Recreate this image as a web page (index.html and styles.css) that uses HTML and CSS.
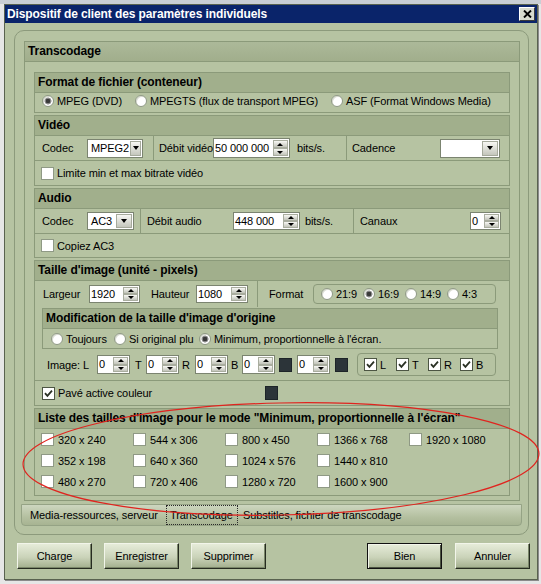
FILE: index.html
```html
<!DOCTYPE html>
<html lang="fr">
<head>
<meta charset="utf-8">
<title>Dispositif de client des paramètres individuels</title>
<link rel="stylesheet" href="styles.css">
</head>
<body>
<div class="screen">
  <div class="dialog">
    <div class="titlebar">
      <span class="title">Dispositif de client des paramètres individuels</span>
      <span class="close"><svg width="9" height="8" viewBox="0 0 9 8"><path d="M1 0.5 L8 7.5 M8 0.5 L1 7.5" stroke="#000" stroke-width="1.9" fill="none"/></svg></span>
    </div>
    <div class="dlg-body">
      <div class="tabpanel">
        <div class="group">
          <div class="ghead">Transcodage</div>
          <div class="gbody">

            <div class="sub sub-fmt">
              <div class="shead">Format de fichier (conteneur)</div>
              <div class="fmt-row">
                <span class="opt w-mpeg"><i class="rb on"></i>MPEG (DVD)</span>
                <span class="opt w-mpegts"><i class="rb"></i>MPEGTS (flux de transport MPEG)</span>
                <span class="opt"><i class="rb"></i>ASF (Format Windows Media)</span>
              </div>
            </div>

            <div class="sub sub-video">
              <div class="shead">Vidéo</div>
              <div class="cells cells-video">
                <div class="cell c-pad7"><span class="lbl lbl-codec">Codec</span><span class="combo combo-v"><span class="val">MPEG2</span><span class="drop"></span></span></div>
                <div class="cell c-pad5"><span class="lbl lbl-vbr">Débit vidéo</span><span class="spin spin-vbr"><span class="val">50 000 000</span><span class="arrows"><b class="up"></b><b class="dn"></b></span></span><span class="unit unit-v">bits/s.</span></div>
                <div class="cell c-pad5 c-last"><span class="lbl">Cadence</span><span class="combo combo-cad"><span class="val"></span><span class="drop"></span></span></div>
              </div>
              <div class="chk-row row24"><span class="opt"><i class="cb"></i>Limite min et max bitrate vidéo</span></div>
            </div>

            <div class="sub sub-audio">
              <div class="shead">Audio</div>
              <div class="cells cells-audio">
                <div class="cell c-pad7"><span class="lbl lbl-codec">Codec</span><span class="combo combo-a"><span class="val">AC3</span><span class="drop"></span></span></div>
                <div class="cell c-pad6"><span class="lbl lbl-abr">Débit audio</span><span class="spin spin-abr"><span class="val">448 000</span><span class="arrows"><b class="up"></b><b class="dn"></b></span></span><span class="unit unit-a">bits/s.</span></div>
                <div class="cell c-pad6 c-last"><span class="lbl">Canaux</span><span class="spin spin-ch"><span class="val">0</span><span class="arrows"><b class="up"></b><b class="dn"></b></span></span></div>
              </div>
              <div class="chk-row row23"><span class="opt"><i class="cb"></i>Copiez AC3</span></div>
            </div>

            <div class="sub sub-size">
              <div class="shead">Taille d'image (unité - pixels)</div>
              <div class="size-row">
                <div class="size-left">
                  <span class="lbl lbl-w">Largeur</span>
                  <span class="spin spin-size1"><span class="val">1920</span><span class="arrows"><b class="up"></b><b class="dn"></b></span></span>
                  <span class="lbl lbl-h">Hauteur</span>
                  <span class="spin spin-size2"><span class="val">1080</span><span class="arrows"><b class="up"></b><b class="dn"></b></span></span>
                </div>
                <div class="size-right">
                  <span class="lbl lbl-fmt">Format</span>
                  <div class="ratio-box">
                    <span class="opt"><i class="rb"></i>21:9</span>
                    <span class="opt"><i class="rb on"></i>16:9</span>
                    <span class="opt"><i class="rb"></i>14:9</span>
                    <span class="opt"><i class="rb"></i>4:3</span>
                  </div>
                </div>
              </div>

              <div class="sub sub-mod">
                <div class="shead">Modification de la taille d'image d'origine</div>
                <div class="mod-row">
                  <span class="opt w-tj"><i class="rb"></i>Toujours</span>
                  <span class="opt w-si"><i class="rb"></i>Si original plu</span>
                  <span class="opt"><i class="rb on"></i>Minimum, proportionnelle à l'écran.</span>
                </div>
              </div>

              <div class="img-row">
                <span class="lbl lbl-img">Image: L</span>
                <span class="spin spin-img"><span class="val">0</span><span class="arrows"><b class="up"></b><b class="dn"></b></span></span>
                <span class="lbl lbl-t">T</span>
                <span class="spin spin-img"><span class="val">0</span><span class="arrows"><b class="up"></b><b class="dn"></b></span></span>
                <span class="lbl lbl-r">R</span>
                <span class="spin spin-img"><span class="val">0</span><span class="arrows"><b class="up"></b><b class="dn"></b></span></span>
                <span class="lbl lbl-b">B</span>
                <span class="spin spin-img"><span class="val">0</span><span class="arrows"><b class="up"></b><b class="dn"></b></span></span>
                <span class="swatch sw-a"></span>
                <span class="spin spin-img sp-e"><span class="val">0</span><span class="arrows"><b class="up"></b><b class="dn"></b></span></span>
                <span class="swatch sw-b"></span>
                <div class="chk-box">
                  <span class="chk-item"><i class="cb on"><svg width="11" height="11" viewBox="0 0 11 11"><path d="M2 5.2 L4.4 7.8 L9 2.6" stroke="#2a3124" stroke-width="1.8" fill="none"/></svg></i>L</span>
                  <span class="chk-item"><i class="cb on"><svg width="11" height="11" viewBox="0 0 11 11"><path d="M2 5.2 L4.4 7.8 L9 2.6" stroke="#2a3124" stroke-width="1.8" fill="none"/></svg></i>T</span>
                  <span class="chk-item"><i class="cb on"><svg width="11" height="11" viewBox="0 0 11 11"><path d="M2 5.2 L4.4 7.8 L9 2.6" stroke="#2a3124" stroke-width="1.8" fill="none"/></svg></i>R</span>
                  <span class="chk-item"><i class="cb on"><svg width="11" height="11" viewBox="0 0 11 11"><path d="M2 5.2 L4.4 7.8 L9 2.6" stroke="#2a3124" stroke-width="1.8" fill="none"/></svg></i>B</span>
                </div>
              </div>

              <div class="pave-row">
                <span class="opt pave-opt"><i class="cb on"><svg width="11" height="11" viewBox="0 0 11 11"><path d="M2 5.2 L4.4 7.8 L9 2.6" stroke="#2a3124" stroke-width="1.8" fill="none"/></svg></i>Pavé active couleur</span>
                <span class="swatch"></span>
              </div>
            </div>

            <div class="sub sub-list">
              <div class="shead">Liste des tailles d'image pour le mode "Minimum, proportionnelle à l'écran"</div>
              <div class="list-grid">
                <span class="lopt"><i class="cb"></i>320 x 240</span>
                <span class="lopt"><i class="cb"></i>544 x 306</span>
                <span class="lopt"><i class="cb"></i>800 x 450</span>
                <span class="lopt"><i class="cb"></i>1366 x 768</span>
                <span class="lopt"><i class="cb"></i>1920 x 1080</span>
                <span class="lopt"><i class="cb"></i>352 x 198</span>
                <span class="lopt"><i class="cb"></i>640 x 360</span>
                <span class="lopt"><i class="cb"></i>1024 x 576</span>
                <span class="lopt"><i class="cb"></i>1440 x 810</span>
                <span class="lopt empty"></span>
                <span class="lopt"><i class="cb"></i>480 x 270</span>
                <span class="lopt"><i class="cb"></i>720 x 406</span>
                <span class="lopt"><i class="cb"></i>1280 x 720</span>
                <span class="lopt"><i class="cb"></i>1600 x 900</span>
              </div>
            </div>

          </div>
        </div>
        <div class="tabbar">
          <span class="tab tab1">Media-ressources, serveur</span>
          <span class="tab tab2">Transcodage</span>
          <span class="tab tab3">Substitles, fichier de transcodage</span>
        </div>
      </div>
      <div class="buttons">
        <div class="btn-group">
          <span class="btn">Charge</span>
          <span class="btn">Enregistrer</span>
          <span class="btn">Supprimer</span>
        </div>
        <div class="btn-group right">
          <span class="btn btn-default">Bien</span>
          <span class="btn">Annuler</span>
        </div>
      </div>
    </div>
  </div>
  <svg class="annot" width="541" height="584" viewBox="0 0 541 584"><ellipse cx="281" cy="459" rx="258" ry="56" transform="rotate(-1.2 281 459)" fill="none" stroke="#e0241f" stroke-width="1.2"/></svg>
</div>
</body>
</html>
```

FILE: styles.css
```css
* { box-sizing: border-box; }
html, body { margin: 0; padding: 0; }
body {
  background: #e2e2e2;
  font-family: "Liberation Sans", Arial, sans-serif;
  font-size: 11px;
  letter-spacing: -0.1px;
  color: #000;
}
i, b { font-style: normal; font-weight: normal; }

.screen {
  position: relative;
  width: 541px;
  height: 584px;
  overflow: hidden;
  padding: 4px 0 0 4px;
  background: linear-gradient(#c9ced4 0 4px, #e6e6e6 4px);
}
.dialog {
  width: 534px;
  height: 576px;
  border: 1px solid #59624f;
  background: #b6c3a2;
  box-shadow: 1px 1px 0 #8a8a8a;
}
.titlebar {
  height: 18px;
  background: #0a246a;
  color: #fff;
  display: flex;
  align-items: center;
  padding: 0 2px;
}
.title {
  flex: 1;
  font-weight: bold;
  font-size: 12px;
  letter-spacing: -0.1px;
  white-space: nowrap;
}
.close {
  width: 16px;
  height: 14px;
  display: flex;
  align-items: center;
  justify-content: center;
  background: #d8dbcf;
  border: 1px solid;
  border-color: #ffffff #3c3c3c #3c3c3c #ffffff;
}

.dlg-body { padding: 7px 0 0 9px; }
.tabpanel {
  width: 515px;
  height: 505px;
  border: 1px solid #8c9a7c;
  border-radius: 10px;
  padding: 10px 0 0 9px;
}
.group {
  width: 496px;
  height: 460px;
  border: 1px solid #8b9a7a;
}
.ghead {
  height: 20px;
  line-height: 19px;
  border-bottom: 1px solid #8b9a7a;
  background: linear-gradient(#acb999, #a1ae8c);
  padding-left: 3px;
  font-weight: bold;
  font-size: 12px;
}
.gbody {
  padding: 10px 9px 0 9px;
  display: flex;
  flex-direction: column;
}
.sub { border: 1px solid #8b9a7a; }
.gbody > .sub + .sub { margin-top: 2px; }
.gbody > .sub-list { margin-top: 3px; }
.shead {
  height: 20px;
  line-height: 19px;
  border-bottom: 1px solid #8b9a7a;
  background: #a1af8c;
  padding-left: 3px;
  font-weight: bold;
  font-size: 12px;
  white-space: nowrap;
}
.sub-fmt { height: 41px; }
.sub-video { height: 71px; }
.sub-audio { height: 70px; }
.sub-size { height: 146px; }
.sub-list { height: 88px; }

/* options */
.opt { display: inline-flex; align-items: center; gap: 3px; white-space: nowrap; }
.rb {
  display: inline-block;
  width: 12px;
  height: 12px;
  border-radius: 50%;
  background: #fff;
  border: 1px solid #8f9985;
  box-shadow: inset 1px 1px 0 #d9dcd2;
  flex: none;
}
.rb.on {
  background: radial-gradient(circle, #3a3a3a 0 2px, #8d8d8d 2.6px 3.2px, #fff 3.8px);
}
.cb {
  display: inline-flex;
  align-items: center;
  justify-content: center;
  width: 13px;
  height: 13px;
  background: #fff;
  border: 1px solid #8f9985;
  flex: none;
}
.cb.on { border-color: #4c5543; }

.fmt-row {
  height: 19px;
  display: flex;
  align-items: center;
  padding: 0 0 4px 7px;
}
.w-mpeg { width: 93px; }
.w-mpegts { width: 196px; }

.cells {
  display: grid;
  height: 25px;
  border-bottom: 1px solid #8b9a7a;
}
.cells-video { grid-template-columns: 119px 193px 1fr; }
.cells-audio { grid-template-columns: 106px 213px 1fr; }
.cell {
  display: flex;
  align-items: center;
  border-right: 1px solid #8b9a7a;
  white-space: nowrap;
}
.cell.c-last { border-right: 0; justify-content: space-between; padding-right: 9px; }
.cells-audio .cell.c-last { padding-right: 8px; }
.c-pad5 { padding-left: 5px; }
.c-pad6 { padding-left: 6px; }
.c-pad7 { padding-left: 7px; }
.lbl { white-space: nowrap; }
.lbl-codec { width: 45px; }
.lbl-abr { width: 86px; }
.unit-v { margin-left: 7px; }
.unit-a { margin-left: 5px; }

.chk-row { display: flex; align-items: center; padding-left: 6px; }
.row24 { height: 24px; }
.row23 { height: 23px; }

/* combo */
.combo {
  display: inline-flex;
  height: 19px;
  background: #fff;
  border: 1px solid #7b8470;
}
.combo .val { flex: 1; padding-left: 3px; line-height: 17px; }
.combo-v { width: 56px; }
.combo-a { width: 47px; height: 18px; }
.combo-a .val { line-height: 16px; }
.combo-cad { width: 60px; }
.drop {
  width: 16px;
  margin: 1px;
  display: flex;
  align-items: center;
  justify-content: center;
  background: linear-gradient(#f7f7f3, #c4c6bc);
  border: 1px solid #a6aa9c;
}
.drop::after {
  content: "";
  border-left: 3.5px solid transparent;
  border-right: 3.5px solid transparent;
  border-top: 4px solid #000;
}

/* spin */
.spin {
  display: inline-flex;
  height: 18px;
  background: #fff;
  border: 1px solid #7b8470;
}
.spin .val { flex: 1; padding-left: 1px; line-height: 16px; white-space: nowrap; overflow: hidden; }
.arrows {
  width: 15px;
  display: flex;
  flex-direction: column;
  margin: 1px;
}
.arrows b {
  flex: 1;
  display: flex;
  align-items: center;
  justify-content: center;
  background: linear-gradient(#f8f8f4, #c2c4ba);
  border: 1px solid #a9ad9f;
}
.arrows b.up::after {
  content: "";
  border-left: 3px solid transparent;
  border-right: 3px solid transparent;
  border-bottom: 3px solid #000;
}
.arrows b.dn::after {
  content: "";
  border-left: 3px solid transparent;
  border-right: 3px solid transparent;
  border-top: 3px solid #000;
}
.spin-vbr { width: 77px; height: 20px; }
.spin-vbr .val { line-height: 18px; }
.spin-abr { width: 67px; }
.spin-ch { width: 31px; }
.spin-size1 { width: 51px; }
.spin-size2 { width: 52px; }
.spin-img { width: 33px; height: 19px; }
.spin-img .val { line-height: 17px; }

/* size section */
.size-row { display: flex; height: 26px; }
.size-left {
  width: 223px;
  display: flex;
  align-items: center;
  padding-left: 8px;
  border-right: 1px solid #8b9a7a;
}
.lbl-w { width: 46px; }
.lbl-h { width: 45px; margin-left: 11px; }
.size-right {
  display: flex;
  align-items: center;
  padding-left: 11px;
}
.lbl-fmt { width: 44px; }
.ratio-box {
  width: 183px;
  height: 20px;
  border: 1px solid #8b9a7a;
  border-radius: 4px;
  display: flex;
  align-items: center;
  gap: 6px;
  padding-left: 7px;
}

.sub-mod { margin: 1px 11px 0 7px; height: 41px; }
.mod-row {
  height: 19px;
  display: flex;
  align-items: center;
  padding-left: 8px;
}
.w-tj { width: 63px; }
.w-si { width: 85px; }

.img-row {
  height: 31px;
  display: flex;
  align-items: center;
  padding-left: 12px;
}
.lbl-img { width: 50px; }
.lbl-t { width: 11px; margin-left: 5px; }
.lbl-r { width: 13px; margin-left: 3px; }
.lbl-b { width: 11px; margin-left: 3px; }
.swatch {
  display: inline-block;
  width: 13px;
  height: 14px;
  background: #2c3439;
  border: 1px solid #1d2428;
}
.sw-a { margin-left: 4px; }
.sp-e { margin-left: 5px; }
.sw-b { margin-left: 5px; }
.chk-box {
  margin-left: 9px;
  width: 139px;
  height: 23px;
  border: 1px solid #8b9a7a;
  border-radius: 4px;
  display: flex;
  align-items: center;
  padding-left: 6px;
}
.chk-item { width: 32px; display: inline-flex; align-items: center; gap: 3px; }

.pave-row {
  height: 25px;
  border-top: 1px solid #8b9a7a;
  display: flex;
  align-items: center;
  padding-left: 7px;
}
.pave-opt { width: 223px; }

/* list */
.list-grid {
  display: grid;
  grid-template-columns: repeat(5, 92px);
  grid-auto-rows: 21px;
  align-items: center;
  padding-left: 6px;
}
.lopt { display: inline-flex; align-items: center; gap: 4px; white-space: nowrap; }

/* tabs */
.tabbar {
  display: flex;
  width: 501px;
  height: 22px;
  margin: 3px 0 0 -3px;
  background: linear-gradient(#cdd6bf, #b4c0a0 60%, #a7b492);
  border: 1px solid #95a385;
  border-radius: 0 0 4px 4px;
}
.tab { display: flex; align-items: center; height: 100%; white-space: nowrap; }
.tab1 { width: 144px; padding-left: 8px; }
.tab2 { width: 72px; padding-left: 3px; border: 1px dotted #2a2a2a; }
.tab3 { padding-left: 5px; }

/* buttons */
.buttons {
  display: flex;
  justify-content: space-between;
  width: 513px;
  margin: 8px 0 0 3px;
}
.btn-group { display: flex; gap: 12px; }
.btn-group.right { gap: 13px; }
.btn {
  width: 75px;
  height: 26px;
  display: flex;
  align-items: center;
  justify-content: center;
  background: linear-gradient(#e6ecd9, #cad3b9 55%, #a2ae8d);
  border: 1px solid;
  border-color: #f2f5ea #262b20 #262b20 #f2f5ea;
  box-shadow: inset -1px -1px 0 #7a8669;
}
.btn-default {
  border-color: #111;
  box-shadow: inset 1px 1px 0 #f2f5ea, inset -1px -1px 0 #4a5240;
}

.annot {
  position: absolute;
  left: 0;
  top: 0;
  pointer-events: none;
}
```
